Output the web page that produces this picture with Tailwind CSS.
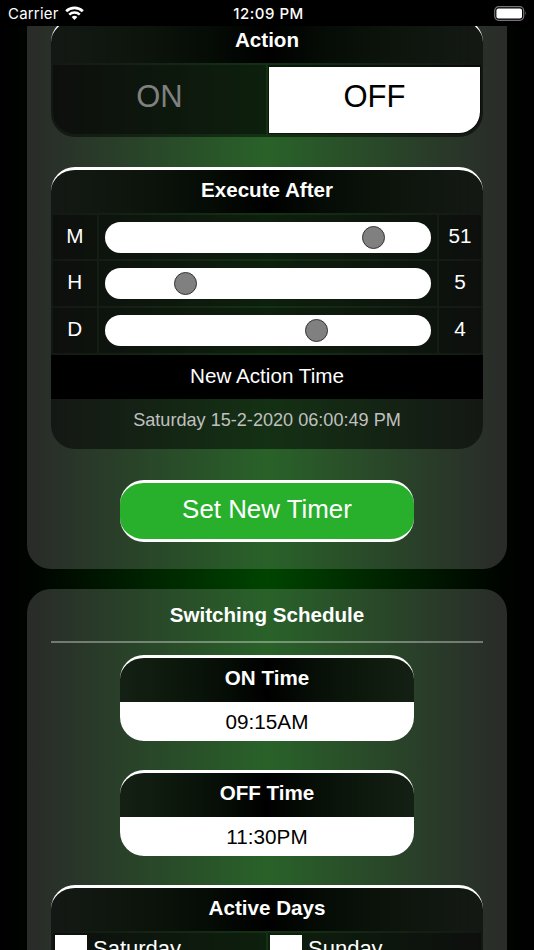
<!DOCTYPE html>
<html lang="en">
<head>
<meta charset="utf-8">
<title>Timer</title>
<script src="https://cdn.jsdelivr.net/npm/@tailwindcss/browser@4"></script>
</head>
<body class="h-[950px] w-[534px] overflow-hidden bg-black font-['Liberation_Sans',Arial,sans-serif] text-white">
<div class="flex h-[950px] flex-col overflow-hidden bg-[linear-gradient(90deg,#000_0%,#000500_7%,#004400_50%,#000500_93%,#000_100%)]">

  <!-- Status bar -->
  <header class="grid h-[26px] shrink-0 grid-cols-3 items-center bg-black px-[8px] pt-[2px] font-[Inter,sans-serif] text-[15px]">
    <div class="flex items-center gap-[6px]">
      <span class="text-[15px] tracking-[0.2px]">Carrier</span>
      <svg class="-mt-[2px] h-[14px] w-[19px]" viewBox="0 0 19 14" fill="none" stroke="#fff" stroke-width="2.8">
        <path d="M1.2 5.2a12 12 0 0 1 16.6 0"/>
        <path d="M4.2 8.6a7.7 7.7 0 0 1 10.6 0" stroke-width="2.5"/>
        <path d="M9.5 14 6.6 11.1a4.2 4.2 0 0 1 5.8 0z" fill="#fff" stroke="none"/>
      </svg>
    </div>
    <div class="pl-[3px] text-center font-medium tracking-[0.5px]">12:09 PM</div>
    <svg class="-mt-[2px] -mr-[1px] h-[15px] w-[34px] justify-self-end" viewBox="0 0 34 15">
      <rect x="1.7" y=".7" width="29" height="13.6" rx="4" fill="none" stroke="#77757b" stroke-width="1.2"/>
      <rect x="3.4" y="2.4" width="25.6" height="10.2" rx="2" fill="#fff"/>
      <path d="M32 5.3q1.8 2.2 0 4.4z" fill="#77757b"/>
    </svg>
  </header>

  <main class="flex min-h-0 flex-1 flex-col gap-[19.5px] overflow-hidden px-[27px]">
    <!-- Timer panel -->
    <section class="flex h-[543px] shrink-0 flex-col items-center overflow-hidden rounded-b-[24px] bg-white/16 px-[24px]">
      <div class="-mt-[8px] flex h-[118.5px] w-full shrink-0 flex-col overflow-hidden rounded-[24px] border-t-[3px] border-white bg-black/50">
        <h2 class="h-[42px] shrink-0 bg-[linear-gradient(90deg,transparent,#000,transparent)] pt-[7px] text-center text-[20.6px] leading-[24px] font-bold">Action</h2>
        <div class="grid flex-1 grid-cols-2 gap-[2px] p-[2px] pb-[3px]">
          <div class="rounded-bl-[22px] bg-black/35 pt-[14px] text-center text-[31px] leading-[36px] text-[#808080]">ON</div>
          <div class="rounded-br-[22px] border-[1px] border-t-[2px] border-black/50 bg-white bg-clip-padding pt-[12px] text-center text-[31px] leading-[36px] text-black">OFF</div>
        </div>
      </div>

      <div class="mt-[30px] flex h-[282.5px] w-full shrink-0 flex-col overflow-hidden rounded-[24px] border-t-[3px] border-white bg-black/50">
        <h2 class="h-[43px] shrink-0 bg-[linear-gradient(90deg,transparent,#000,transparent)] pt-[8px] text-center text-[20.6px] leading-[24px] font-bold">Execute After</h2>
        <div class="grid h-[142px] shrink-0 grid-cols-[43.5px_1fr_42px] grid-rows-3 gap-[2px] p-[2px] text-[20.7px] leading-[24px]">
          <div class="bg-black/35 pt-[9px] text-center">M</div>
          <div class="flex items-center bg-black/35 pr-[6.5px] pl-[6.5px]"><div class="relative mt-px h-[31px] flex-1 rounded-full bg-white"><i class="absolute top-[4px] left-[257px] size-[23px] rounded-full border border-[#333] bg-[#808080]"></i></div></div>
          <div class="bg-black/35 pt-[9px] text-center">51</div>
          <div class="bg-black/35 pt-[9px] text-center">H</div>
          <div class="flex items-center bg-black/35 pr-[6.5px] pl-[6.5px]"><div class="relative mt-px h-[31px] flex-1 rounded-full bg-white"><i class="absolute top-[4px] left-[69px] size-[23px] rounded-full border border-[#333] bg-[#808080]"></i></div></div>
          <div class="bg-black/35 pt-[9px] text-center">5</div>
          <div class="bg-black/35 pt-[9px] text-center">D</div>
          <div class="flex items-center bg-black/35 pr-[6.5px] pl-[6.5px]"><div class="relative h-[31px] flex-1 rounded-full bg-white"><i class="absolute top-[4px] left-[200px] size-[23px] rounded-full border border-[#333] bg-[#808080]"></i></div></div>
          <div class="bg-black/35 pt-[9px] text-center">4</div>
        </div>
        <div class="h-[44px] shrink-0 bg-black pt-[9px] text-center text-[20.7px] leading-[24px]">New Action Time</div>
        <div class="pt-[9px] text-center text-[18.1px] leading-[24px] text-[#c0c0c0]">Saturday 15-2-2020 06:00:49 PM</div>
      </div>

      <button class="mt-[31px] h-[62px] w-[294px] shrink-0 rounded-[24px] border-y-[3px] border-white bg-[#28af2c] pb-[5px] text-[25.9px] leading-[30px]">Set New Timer</button>
    </section>

    <!-- Schedule panel -->
    <section class="flex h-[500px] shrink-0 flex-col items-center rounded-t-[24px] bg-white/16 px-[24px]">
      <h1 class="pt-[14px] text-[20.6px] leading-[24px] font-bold">Switching Schedule</h1>
      <hr class="mt-[14.5px] h-[2px] w-full border-0 bg-white/35">
      <div class="mt-[12px] h-[86px] w-[294px] shrink-0 overflow-hidden rounded-[24px] border-t-[3px] border-white bg-black/50 bg-clip-padding">
        <h2 class="h-[44px] bg-[linear-gradient(90deg,transparent,#000,transparent)] pt-[8px] text-center text-[20.6px] leading-[24px] font-bold">ON Time</h2>
        <div class="h-[39px] bg-white pt-[8px] text-center text-[20.7px] leading-[24px] text-black">09:15AM</div>
      </div>
      <div class="mt-[29px] h-[86px] w-[294px] shrink-0 overflow-hidden rounded-[24px] border-t-[3px] border-white bg-black/50 bg-clip-padding">
        <h2 class="h-[44px] bg-[linear-gradient(90deg,transparent,#000,transparent)] pt-[8px] text-center text-[20.6px] leading-[24px] font-bold">OFF Time</h2>
        <div class="h-[39px] bg-white pt-[8px] text-center text-[20.7px] leading-[24px] text-black">11:30PM</div>
      </div>
      <div class="mt-[29px] h-[200px] w-full shrink-0 overflow-hidden rounded-[24px] border-t-[3px] border-white bg-black/50">
        <h2 class="h-[43px] bg-[linear-gradient(90deg,transparent,#000,transparent)] pt-[8px] text-center text-[20.6px] leading-[24px] font-bold">Active Days</h2>
        <div class="grid grid-cols-2 gap-[2px] p-[2px] text-[22px] leading-[28px]">
          <div class="flex h-[36px] gap-[6px] bg-black/35 pt-[2px] pl-[2px]"><span class="size-[32px] bg-white"></span><span>Saturday</span></div>
          <div class="flex h-[36px] gap-[6px] bg-black/35 pt-[2px] pl-[2px]"><span class="size-[32px] bg-white"></span><span>Sunday</span></div>
        </div>
      </div>
    </section>
  </main>
</div>
</body>
</html>
